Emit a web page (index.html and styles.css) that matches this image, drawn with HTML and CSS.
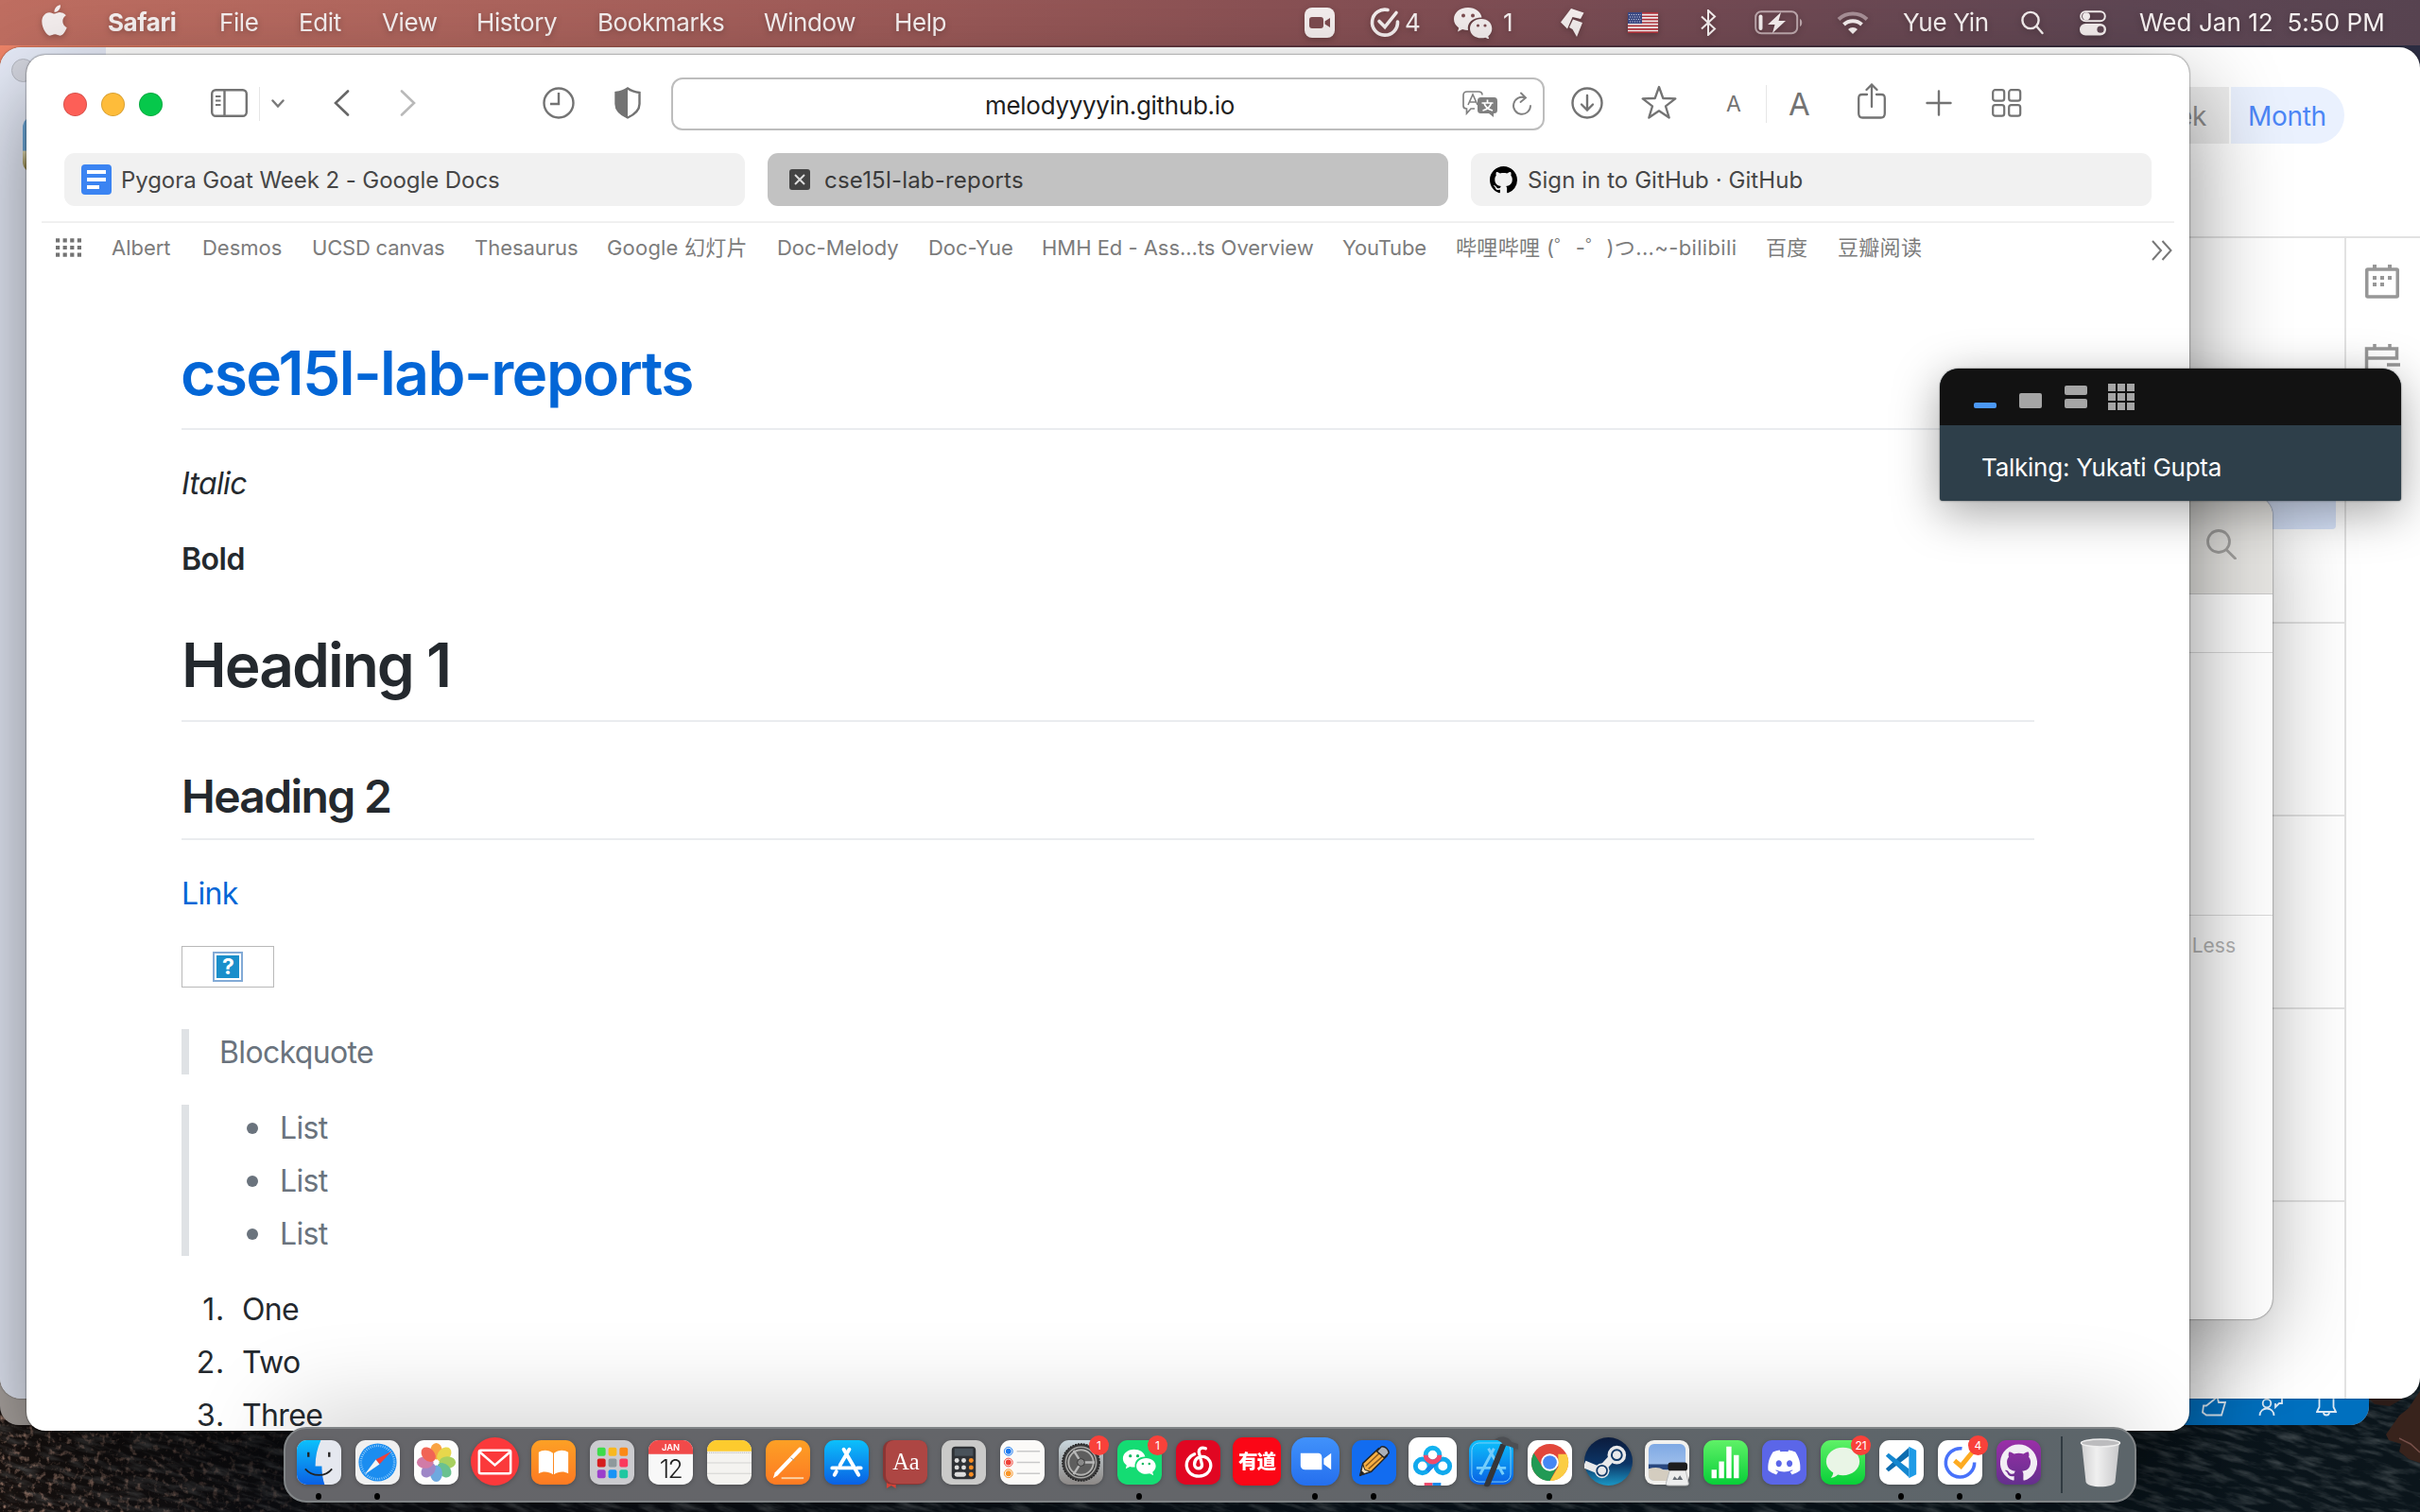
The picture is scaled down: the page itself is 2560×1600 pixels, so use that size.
FILE: index.html
```html
<!DOCTYPE html>
<html lang="en">
<head>
<meta charset="utf-8">
<title>cse15l-lab-reports</title>
<link rel="stylesheet" href="styles.css">
</head>
<body>
<div class="desktop">
  <svg class="wallpaper" viewBox="0 0 2560 140" preserveAspectRatio="none">
    <defs>
      <filter id="waves" x="0" y="0" width="100%" height="100%"><feTurbulence type="fractalNoise" baseFrequency="0.035 0.16" numOctaves="4" seed="7"/><feColorMatrix values="0 0 0 0 .42  0 0 0 0 .45  0 0 0 0 .45  1.7 0 0 0 -.75"/></filter>
      <filter id="sand" x="0" y="0" width="100%" height="100%"><feTurbulence type="fractalNoise" baseFrequency="0.16" numOctaves="3" seed="3"/><feColorMatrix values="0 0 0 0 .55  0 0 0 0 .32  0 0 0 0 .24  3 0 0 0 -1.6"/></filter>
      <linearGradient id="sea"><stop offset="0" stop-color="#17110f"/><stop offset=".12" stop-color="#0d0e12"/><stop offset=".6" stop-color="#08131b"/><stop offset="1" stop-color="#0b151b"/></linearGradient>
      <linearGradient id="fade"><stop offset="0" stop-color="#ccc"/><stop offset="1" stop-color="#000"/></linearGradient>
      <mask id="left"><rect width="420" height="140" fill="url(#fade)"/></mask>
    </defs>
    <rect width="2560" height="140" fill="url(#sea)"/>
    <g transform="rotate(14 1280 70)"><rect x="-40" y="-300" width="2640" height="740" filter="url(#waves)" opacity=".4"/></g>
    <g mask="url(#left)"><rect width="420" height="140" filter="url(#sand)"/></g>
    <path d="M2560 12 2548 30 2538 38 2524 58 2527 64 2540 68 2538 76 2548 84 2560 88Z" fill="#38231c"/>
    <path d="M2538 62l12 6 10 9" fill="none" stroke="#77504a" stroke-width="1.500"/>
    <path d="M2506 20h36l-14 8-16-2z" fill="#2c1c18"/>
  </svg>

  <header class="menubar">
    <nav class="menus">
      <svg class="apple" viewBox="2 0 20 24"><path fill="#f4eeee" d="M12.152 6.896c-.948 0-2.415-1.078-3.96-1.04-2.04.027-3.91 1.183-4.961 3.014-2.117 3.675-.546 9.103 1.519 12.09 1.013 1.454 2.208 3.09 3.792 3.039 1.52-.065 2.09-.987 3.935-.987 1.831 0 2.35.987 3.96.948 1.637-.026 2.676-1.48 3.676-2.948 1.156-1.688 1.636-3.325 1.662-3.415-.039-.013-3.182-1.221-3.22-4.857-.026-3.04 2.48-4.494 2.597-4.559-1.429-2.09-3.623-2.324-4.39-2.376-2-.156-3.675 1.09-4.61 1.09zM15.53 3.83c.843-1.012 1.4-2.427 1.245-3.83-1.207.052-2.662.805-3.532 1.818-.78.896-1.454 2.338-1.273 3.714 1.338.104 2.715-.688 3.559-1.701"/></svg>
      <b>Safari</b><span>File</span><span>Edit</span><span>View</span><span>History</span><span>Bookmarks</span><span>Window</span><span>Help</span>
    </nav>
    <div class="status">
      <svg class="s-cam" viewBox="0 0 32 32"><rect width="32" height="32" rx="8" fill="#f4eeee"/><rect x="5" y="10" width="15" height="12" rx="3" fill="#7d4c50"/><path d="M21.500 14.500 27 11v10l-5.500-3.500z" fill="#7d4c50"/></svg>
      <svg class="s-tick" viewBox="0 0 34 34" fill="none" stroke="#f4eeee" stroke-width="3.600" stroke-linecap="round"><path d="M20 3.500A13.500 13.500 0 1 0 30.500 16"/><path d="m11 15.500 6 6L29 6.500"/></svg>
      <span class="s-four">4</span>
      <svg class="s-wechat" viewBox="0 0 42 34"><path fill="#f4eeee" d="M16 1C7 1 1 6.500 1 13.200c0 3.800 2 7 5.200 9.200L5 26.500l5-2.500c2 .6 4 .9 6 .9-1.500-8 5-13.500 14.500-13.500C29.500 5.500 23.500 1 16 1z"/><path fill="#f4eeee" d="M30 13c-7 0-12 4.600-12 10.200S23 33.300 30 33.300c1.500 0 3-.2 4.300-.6l4 2-1-3.500c2.500-1.900 4-4.700 4-8C41.300 17.600 37 13 30 13z"/><g fill="#7d4c50"><circle cx="11" cy="9.500" r="2"/><circle cx="21" cy="9.500" r="2"/><circle cx="26.500" cy="20" r="1.600"/><circle cx="34" cy="20" r="1.600"/></g></svg>
      <span class="s-one">1</span>
      <svg class="s-kite" viewBox="0 0 28 32"><path fill="#f4eeee" d="M12 1 25.500 5.500 22 12 13.500 10 8 22.500 1 15.500zM14 12.500l10 3.500-6 15-4.500-8-3.500-2z"/></svg>
      <svg class="s-flag" viewBox="0 0 32 22"><rect width="32" height="22" fill="#f6f2f2"/><path stroke="#b2323b" stroke-width="1.700" d="M0 .85h32M0 4.250h32M0 7.600h32M0 11h32M0 14.400h32M0 17.800h32M0 21.150h32"/><rect width="15" height="12" fill="#3c4a85"/><path stroke="#d9dcec" stroke-width="1" stroke-dasharray="1 1.500" d="M1 2.500h13M2 5h12M1 7.500h13M2 10h12"/></svg>
      <svg class="s-bt" viewBox="0 0 18 28" fill="none" stroke="#f4eeee" stroke-width="2"><path d="m2 7.500 14 13L9 27V1l7 6.500-14 13"/></svg>
      <svg class="s-bat" viewBox="0 0 52 26"><rect x="1.200" y="1.200" width="44" height="23" rx="6" fill="none" stroke="#bda7ac" stroke-width="2"/><path d="M48 9c3 1 3 7 0 8z" fill="#bda7ac"/><rect x="4.500" y="4.500" width="4" height="16.500" rx="2" fill="#f4eeee"/><path d="M28 2 14 15h7.500L19 24l14-13h-7.500z" fill="#f4eeee"/></svg>
      <svg class="s-wifi" viewBox="0 0 34 24" fill="none"><path d="M2 8.500a22 22 0 0 1 30 0" stroke="#a78f96" stroke-width="4"/><path d="M7.500 14a14 14 0 0 1 19 0" stroke="#f4eeee" stroke-width="4"/><path d="m17 24-5-5a7 7 0 0 1 10 0z" fill="#f4eeee"/></svg>
      <span class="s-user">Yue Yin</span>
      <svg class="s-search" viewBox="0 0 24 26" fill="none" stroke="#f4eeee" stroke-width="2.400" stroke-linecap="round"><circle cx="10" cy="10.500" r="8.600"/><path d="m16.500 17 6 7"/></svg>
      <svg class="s-cc" viewBox="0 0 28 27"><rect x="1.200" y="1.200" width="25.600" height="10" rx="5" fill="none" stroke="#f4eeee" stroke-width="2"/><circle cx="7" cy="6.200" r="4" fill="#f4eeee"/><rect y="14" width="28" height="12.500" rx="6.200" fill="#f4eeee"/><circle cx="22" cy="20.200" r="3.600" fill="#5f4753"/></svg>
      <span class="s-date">Wed Jan 12&nbsp; 5:50 PM</span>
    </div>
  </header>

  <section class="window code-window">
    <div class="code-status">
      <svg class="thumb" viewBox="0 0 26 28" fill="none" stroke="#dce9f4" stroke-width="1.800"><path d="M2 16.500h3L14.500 9 13 5h3l2 8h7l-4 13.500H5l-4-3z"/></svg>
      <svg class="person" viewBox="0 0 28 28" fill="none" stroke="#dce9f4" stroke-width="1.800"><circle cx="9" cy="14" r="4.300"/><path d="M1.500 27c0-10 15-10 15 0M12 4h13v10h-3l-4 4v-4"/></svg>
      <svg class="bell" viewBox="0 0 22 28" fill="none" stroke="#dce9f4" stroke-width="1.800"><path d="M1 23h20l-2.500-5v-9c0-8-15-8-15 0v9zM8 23.500c0 4 6 4 6 0"/></svg>
    </div>
  </section>

  <section class="window planner">
    <aside class="planner-side"><i class="planner-dot"></i><i class="planner-photo"></i></aside>
    <div class="planner-main">
      <div class="planner-top"><div class="views"><span class="view-week">Week</span><span class="view-month">Month</span></div></div>
      <div class="planner-body">
        <div class="weeks"><div><i class="event"></i></div><div></div><div></div><div></div><div></div></div>
        <div class="rail">
          <svg viewBox="0 0 38 38" fill="none" stroke="#979797" stroke-width="3.500"><rect x="2.750" y="6" width="32.500" height="29" rx="1"/><path d="M11 1v6M27 1v6" stroke-width="4"/><path d="M9 15h4m4 0h4m4 0h4M9 22h4m4 0h4" stroke-width="3.800"/></svg>
          <svg viewBox="0 0 38 38" fill="none" stroke="#979797" stroke-width="3.500"><path d="M2.500 36V6h32v10H2M24 23h14M11 1v6M27 1v6"/></svg>
          <svg class="dots" viewBox="0 0 38 10" fill="#929292"><circle cx="5" cy="5" r="4"/><circle cx="19" cy="5" r="4"/><circle cx="33" cy="5" r="4"/></svg>
        </div>
      </div>
    </div>
  </section>

  <section class="window chat">
    <div class="chat-head"><svg viewBox="0 0 32 32" fill="none" stroke="#a3a2a0" stroke-width="2.800" stroke-linecap="round"><circle cx="13" cy="13" r="11.500"/><path d="m21.500 22 9 9"/></svg></div>
    <div class="chat-tabs"></div>
    <div class="chat-list"></div>
    <div class="chat-less">Less</div>
  </section>

  <section class="window safari">
    <div class="toolbar">
      <div class="lights"><i class="red"></i><i class="yellow"></i><i class="green"></i></div>
      <svg class="t-side" viewBox="0 0 39 30" fill="none" stroke="#737373" stroke-width="2.400"><rect x="1.200" y="1.200" width="36.600" height="27.600" rx="4"/><path d="M14.500 1v28"/><path d="M5 8h5.500M5 12.500h5.500M5 17h5.500" stroke-width="1.800"/></svg>
      <i class="t-line"></i>
      <svg class="t-down" viewBox="0 0 14 9" fill="none" stroke="#7a7a7a" stroke-width="2.400" stroke-linecap="round"><path d="m1.500 1.500 5.500 6 5.500-6"/></svg>
      <svg class="t-back" viewBox="0 0 17 28" fill="none" stroke="#666" stroke-width="2.600" stroke-linecap="round"><path d="M15 1.500 2 14l13 12.500"/></svg>
      <svg class="t-fwd" viewBox="0 0 17 28" fill="none" stroke="#b9b9b9" stroke-width="2.600" stroke-linecap="round"><path d="M2 1.500 15 14 2 26.500"/></svg>
      <svg class="t-clock" viewBox="0 0 34 34" fill="none" stroke="#737373" stroke-width="2.400"><circle cx="17" cy="17" r="15.500"/><path d="M17 6v12H8"/></svg>
      <svg class="t-shield" viewBox="0 0 28 34"><path d="M14 1.500c4 3 8 4 12.500 4.500v12c0 7-5 11-12.500 14.500C6.500 29 1.500 25 1.500 18V6C6 5.500 10 4.500 14 1.500z" fill="none" stroke="#737373" stroke-width="2.400"/><path d="M14 1v32C6 29 1 25 1 18V6C6 5.500 10 4.500 14 1z" fill="#737373"/></svg>
      <div class="address">
        <span>melodyyyyin.github.io</span>
        <svg class="t-trans" viewBox="0 0 38 28"><path d="M13 19H9l-4.500 5v-5C2 19 1 18 1 16V5c0-3 1-4 4-4h12c3 0 4 1 4 3.500" fill="none" stroke="#808080" stroke-width="1.700"/><path d="M6 15 11 4l5 11M7.500 12h7" fill="none" stroke="#808080" stroke-width="1.600"/><path d="M20 7h13c3 0 4 1 4 4v9c0 3-1 4-4 4v4l-5-4h-8c-3 0-4-1-4-4v-9c0-3 1-4 4-4z" fill="#808080"/><path d="M26.500 9.500v3M20.500 13h12M23 13c1 4 5 7 9 8M30.500 13c-1 4-5 7-9 8" fill="none" stroke="#fff" stroke-width="1.700"/></svg>
        <svg class="t-reload" viewBox="0 0 22 26" fill="none" stroke="#808080" stroke-width="1.900" stroke-linecap="round"><path d="M14 6.300A9 9 0 1 0 20 15M10 1.500l5 5-5.500 4.500"/></svg>
      </div>
      <svg class="t-dl" viewBox="0 0 34 34" fill="none" stroke="#737373" stroke-width="2.400"><circle cx="17" cy="17" r="15.500"/><path d="M17 9v15M11 18.500l6 6 6-6" stroke-linecap="round"/></svg>
      <svg class="t-star" viewBox="0 0 38 36" fill="none" stroke="#737373" stroke-width="2.300" stroke-linejoin="round"><path d="m19 2 4.300 12 13 .4L26 22.300l3.700 12.200L19 27.300 8.300 34.500 12 22.300 1.700 14.400l13-.4z"/></svg>
      <span class="t-a small">A</span>
      <i class="t-line tall"></i>
      <span class="t-a">A</span>
      <svg class="t-share" viewBox="0 0 30 38" fill="none" stroke="#737373" stroke-width="2.300" stroke-linecap="round"><path d="M10 12H5c-3 0-3.800 1-3.800 4v16c0 3 1 4.500 4 4.500h19.600c3 0 4-1.500 4-4.500V16c0-3-.8-4-3.800-4h-5M15 25V2M9.500 7 15 1.500 20.500 7"/></svg>
      <svg class="t-plus" viewBox="0 0 28 28" stroke="#737373" stroke-width="2.400" stroke-linecap="round"><path d="M14 1.500v25M1.500 14h25"/></svg>
      <svg class="t-grid" viewBox="0 0 32 30" fill="none" stroke="#737373" stroke-width="2.200"><rect x="1.200" y="1.200" width="12" height="11.500" rx="2.500"/><rect x="18.200" y="1.200" width="12" height="11.500" rx="2.500"/><rect x="1.200" y="17.200" width="12" height="11.500" rx="2.500"/><rect x="18.200" y="17.200" width="12" height="11.500" rx="2.500"/></svg>
    </div>
    <div class="tabs">
      <div class="tab docs"><svg viewBox="0 0 32 32"><rect width="32" height="32" rx="4" fill="#3b84f2"/><path d="M6 8h20M6 16h20M6 24h13" stroke="#fff" stroke-width="4"/></svg><span>Pygora Goat Week 2 - Google Docs</span></div>
      <div class="tab active"><svg viewBox="0 0 22 22"><rect width="22" height="22" rx="3" fill="#444"/><path d="m6 6 10 10M16 6 6 16" stroke="#ddd" stroke-width="2"/></svg><span>cse15l-lab-reports</span></div>
      <div class="tab hub"><svg viewBox="0 0 16 16"><use href="#octocat"/></svg><span>Sign in to GitHub · GitHub</span></div>
    </div>
    <div class="favorites">
      <svg class="f-grid" viewBox="0 0 28 20" stroke="#737373" stroke-width="4.200" stroke-dasharray="4.200 3.400"><path d="M0 2.400h28M0 10h28M0 17.600h28"/></svg>
      <span>Albert</span><span>Desmos</span><span>UCSD canvas</span><span>Thesaurus</span><span>Google 幻灯片</span><span>Doc-Melody</span><span>Doc-Yue</span><span>HMH Ed - Ass...ts Overview</span><span>YouTube</span><span class="bili">哔哩哔哩 (゜-゜)つ...~-bilibili</span><span>百度</span><span>豆瓣阅读</span>
      <svg class="f-more" viewBox="0 0 24 22" fill="none" stroke="#777" stroke-width="2"><path d="m2 1 9 10-9 10M12.500 1l9 10-9 10"/></svg>
    </div>
    <main class="markdown">
      <h1><a>cse15l-lab-reports</a></h1>
      <p><em>Italic</em></p>
      <p><strong>Bold</strong></p>
      <h1>Heading 1</h1>
      <h2>Heading 2</h2>
      <p><a>Link</a></p>
      <div class="missing"><span><b>?</b></span></div>
      <blockquote>Blockquote</blockquote>
      <blockquote class="list"><ul><li>List</li><li>List</li><li>List</li></ul></blockquote>
      <ol><li>One</li><li>Two</li><li>Three</li></ol>
    </main>
  </section>

  <section class="call">
    <div class="call-bar">
      <svg viewBox="0 0 170 28"><g fill="#a5a5a5"><rect x="48" y="10" width="24" height="16" rx="2"/><rect x="96" y="2" width="24" height="10" rx="2"/><rect x="96" y="16" width="24" height="10" rx="2"/></g><rect y="20" width="24" height="6" rx="2" fill="#4b98f5"/><g stroke="#a5a5a5" stroke-width="8" stroke-dasharray="8 2"><path d="M142 4h28M142 14h28M142 24h28"/></g></svg>
    </div>
    <div class="call-body">Talking: Yukati Gupta</div>
  </section>

  <footer class="dock">
    <svg class="defs" width="0" height="0"><defs>
      <path id="octocat" d="M8 0C3.58 0 0 3.58 0 8c0 3.54 2.29 6.53 5.47 7.59.4.07.55-.17.55-.38 0-.19-.01-.82-.01-1.49-2.01.37-2.53-.49-2.69-.94-.09-.23-.48-.94-.82-1.13-.28-.15-.68-.52-.01-.53.63-.01 1.08.58 1.23.82.72 1.21 1.87.87 2.33.66.07-.52.28-.87.51-1.07-1.78-.2-3.64-.89-3.64-3.95 0-.87.31-1.59.82-2.15-.08-.2-.36-1.02.08-2.12 0 0 .67-.21 2.2.82.64-.18 1.32-.27 2-.27.68 0 1.36.09 2 .27 1.53-1.04 2.2-.82 2.2-.82.44 1.1.16 1.92.08 2.12.51.56.82 1.27.82 2.15 0 3.07-1.87 3.75-3.65 3.95.29.25.54.73.54 1.48 0 1.07-.01 1.93-.01 2.2 0 .21.15.46.55.38A8.013 8.013 0 0016 8c0-4.42-3.58-8-8-8z"/>
      <linearGradient id="gBlue" x2="0" y2="1"><stop stop-color="#0cc0fb"/><stop offset="1" stop-color="#0a60e4"/></linearGradient>
      <linearGradient id="gOrange" x2="0" y2="1"><stop stop-color="#fda025"/><stop offset="1" stop-color="#fd7a23"/></linearGradient>
      <linearGradient id="gGreen" x2="0" y2="1"><stop stop-color="#5ff167"/><stop offset="1" stop-color="#08cf38"/></linearGradient>
      <linearGradient id="gSteam" x2="0" y2="1"><stop stop-color="#0b1b3c"/><stop offset=".55" stop-color="#0c3566"/><stop offset="1" stop-color="#1a96c4"/></linearGradient>
      <linearGradient id="gGray" x2="0" y2="1"><stop stop-color="#c9d6dd"/><stop offset="1" stop-color="#8d8987"/></linearGradient>
      <linearGradient id="gZoom" x2="0" y2="1"><stop stop-color="#4192fb"/><stop offset="1" stop-color="#256fee"/></linearGradient>
      <linearGradient id="gTrash"><stop stop-color="#d0d0d1"/><stop offset=".4" stop-color="#f0f0f0"/><stop offset="1" stop-color="#c8c8ca"/></linearGradient>
      <linearGradient id="gPurple" x2="0" y2="1"><stop stop-color="#9a2fa8"/><stop offset="1" stop-color="#64308d"/></linearGradient>
      <linearGradient id="gSky" x2="0" y2="1"><stop stop-color="#7fa9e4"/><stop offset="1" stop-color="#b3cdf0"/></linearGradient>
    </defs></svg>
    <div class="app on"><svg viewBox="0 0 48 48"><rect width="48" height="48" rx="11" fill="#e5e8ef"/><path d="M11 0h15c-4 9-6 18-6 28h7c0 7 1 14 3 20H11A11 11 0 0 1 0 37V11A11 11 0 0 1 11 0z" fill="url(#gBlue)"/><path d="M12.500 13v5M35 13v5" stroke="#222" stroke-width="2.400"/><path d="M9 31c8 9 22 9 29 0" fill="none" stroke="#222" stroke-width="1.800"/></svg></div>
    <div class="app on"><svg viewBox="0 0 48 48"><rect width="48" height="48" rx="11" fill="#f0f0f0"/><circle cx="24" cy="24" r="20.500" fill="#1b8df0"/><circle cx="24" cy="24" r="18" fill="none" stroke="#9fd4fb" stroke-width="2.500" stroke-dasharray=".8 1.500"/><path d="M39 12 22 21l4 5z" fill="#f0413a"/><path d="m10 37 12-16 4 5z" fill="#f4f4f4"/></svg></div>
    <div class="app"><svg viewBox="0 0 48 48"><rect width="48" height="48" rx="11" fill="#fdfdfd"/><g opacity=".88"><ellipse cx="24" cy="12" rx="6.500" ry="9" fill="#f9972a"/><ellipse cx="24" cy="12" rx="6.500" ry="9" fill="#e6d234" transform="rotate(45 24 24)"/><ellipse cx="24" cy="12" rx="6.500" ry="9" fill="#9dca4a" transform="rotate(90 24 24)"/><ellipse cx="24" cy="12" rx="6.500" ry="9" fill="#55b982" transform="rotate(135 24 24)"/><ellipse cx="24" cy="12" rx="6.500" ry="9" fill="#5b9edb" transform="rotate(180 24 24)"/><ellipse cx="24" cy="12" rx="6.500" ry="9" fill="#9277c0" transform="rotate(225 24 24)"/><ellipse cx="24" cy="12" rx="6.500" ry="9" fill="#cc6a9c" transform="rotate(270 24 24)"/><ellipse cx="24" cy="12" rx="6.500" ry="9" fill="#f0503e" transform="rotate(315 24 24)"/></g></svg></div>
    <div class="app big"><svg viewBox="0 0 52 52"><circle cx="26" cy="26" r="26" fill="#fb393b"/><rect x="9" y="14" width="34" height="25" rx="2" fill="none" stroke="#fff" stroke-width="2.600"/><path d="m10 16 16 14 16-14" fill="none" stroke="#fff" stroke-width="2.600"/></svg></div>
    <div class="app"><svg viewBox="0 0 48 48"><rect width="48" height="48" rx="11" fill="url(#gOrange)"/><path d="M23.500 14C19 10 12 10 8 13v23c5-3 11-2 15.500 1zM24.500 14c4.500-4 11.500-4 15.500-1v23c-5-3-11-2-15.500 1z" fill="#fff"/></svg></div>
    <div class="app"><svg viewBox="0 0 48 48"><rect width="48" height="48" rx="11" fill="#cbcbcf"/><rect x="8" y="8" width="9" height="9" rx="2" fill="#3ddb4a"/><rect x="20" y="8" width="9" height="9" rx="2" fill="#f8b81f"/><rect x="32" y="8" width="9" height="9" rx="2" fill="#fb8916"/><rect x="8" y="20" width="9" height="9" rx="2" fill="#d51d1d"/><rect x="20" y="20" width="9" height="9" rx="2" fill="#8e999c"/><rect x="32" y="20" width="9" height="9" rx="2" fill="#fb3a5d"/><rect x="8" y="32" width="9" height="9" rx="2" fill="#9b3fcb"/><rect x="20" y="32" width="9" height="9" rx="2" fill="#1793f5"/><rect x="32" y="32" width="9" height="9" rx="2" fill="#1fc7a0"/></svg></div>
    <div class="app"><svg viewBox="0 0 48 48"><rect width="48" height="48" rx="11" fill="#f8f8f8"/><path d="M0 15v-4A11 11 0 0 1 11 0h26a11 11 0 0 1 11 11v4z" fill="#f14a4a"/><text x="24" y="11.500" class="cal-month">JAN</text><text x="24" y="41" class="cal-day">12</text></svg></div>
    <div class="app"><svg viewBox="0 0 48 48"><rect width="48" height="48" rx="11" fill="#f4f3f0"/><path d="M0 12v-1A11 11 0 0 1 11 0h26a11 11 0 0 1 11 11v1z" fill="#fdcb2e"/><path d="M0 13.500h48" stroke="#aaa" stroke-width="1" stroke-dasharray="1 1"/><path d="M0 24.500h48M0 36h48" stroke="#d2d2d0"/></svg></div>
    <div class="app"><svg viewBox="0 0 48 48"><rect width="48" height="48" rx="11" fill="url(#gOrange)"/><path d="M36 8c3-1 4 1 2 4L13 38l-5 3 2-6z" fill="#fff"/><path d="m27 19 4 3" stroke="#999"/><path d="M17 41h24" stroke="#fbd1a3" stroke-width="2"/></svg></div>
    <div class="app"><svg viewBox="0 0 48 48"><rect width="48" height="48" rx="11" fill="url(#gBlue)"/><path d="M27 10 17 27M13 34l-2 3.500M21 10l16 27.500M8.500 30H30M35.500 30h4" stroke="#fff" stroke-width="4" stroke-linecap="round"/></svg></div>
    <div class="app"><svg viewBox="0 0 48 48" overflow="visible"><path d="M4 44h10v8l-5-3-5 3z" fill="#d44136"/><rect width="48" height="48" rx="10" fill="#8a3634"/><rect x="3" width="45" height="47" rx="9" fill="#ad4643"/><text x="25" y="32" class="dict">Aa</text></svg></div>
    <div class="app"><svg viewBox="0 0 48 48"><rect width="48" height="48" rx="11" fill="#cacac9"/><rect x="11" y="7" width="26" height="35" rx="4" fill="#2e3135"/><rect x="14" y="9" width="20" height="8" fill="#49525a"/><g fill="#ddd"><circle cx="16.500" cy="22" r="2.500"/><circle cx="24" cy="22" r="2.500"/><circle cx="16.500" cy="29.500" r="2.500"/><circle cx="24" cy="29.500" r="2.500"/><rect x="14" y="34.500" width="12.500" height="5" rx="2.500"/></g><g fill="#fa8d22"><circle cx="32" cy="22" r="2.500"/><circle cx="32" cy="29.500" r="2.500"/><circle cx="32" cy="37" r="2.500"/></g></svg></div>
    <div class="app"><svg viewBox="0 0 48 48"><rect width="48" height="48" rx="11" fill="#fbfaf8"/><path d="M18 12h25M18 24h25M18 36h25" stroke="#c9c9c9" stroke-width="1.500"/><g stroke-width="1"><circle cx="9" cy="12" r="3" fill="#1a79f0"/><circle cx="9" cy="12" r="4.500" fill="none" stroke="#1a79f0"/><circle cx="9" cy="24" r="3" fill="#ef4035"/><circle cx="9" cy="24" r="4.500" fill="none" stroke="#ef4035"/><circle cx="9" cy="36" r="3" fill="#f99525"/><circle cx="9" cy="36" r="4.500" fill="none" stroke="#f99525"/></g></svg></div>
    <div class="app"><svg viewBox="0 0 48 48"><rect width="48" height="48" rx="11" fill="url(#gGray)"/><circle cx="24" cy="24" r="20" fill="#3b3b3c" stroke="#222" stroke-width="1.500" stroke-dasharray="2 1"/><circle cx="24" cy="24" r="16.500" fill="none" stroke="#a9a9a7" stroke-width="1.500"/><circle cx="24" cy="24" r="13.500" fill="#5e5e5e" stroke="#b2b2b0" stroke-width="2"/><path d="M26 24h13M23 22l-7-11M23 26l-7 11" stroke="#b8b8b8" stroke-width="2.400"/><circle cx="24" cy="24" r="4" fill="#888" stroke="#333"/></svg><i class="badge">1</i></div>
    <div class="app on"><svg viewBox="0 0 48 48"><rect width="48" height="48" rx="11" fill="#14dc73"/><path fill="#fff" d="M18 10C11 10 6 14.500 6 20c0 3 1.500 5.500 4 7l-1 4 4.500-2.500c2 .5 3.500.7 5.500.6C18 22 24 17.500 30 18c-1-5-6-8-12-8z"/><path fill="#fff" d="M31 19.500c-6 0-10.500 4-10.500 8.500S25 36.500 31 36.500c1.500 0 2.500-.2 4-.5l4 2-1-3.500c2-1.500 3.500-4 3.500-6.500 0-4.500-4.500-8.500-10.500-8.500z"/><g fill="#14b862"><circle cx="14" cy="17" r="1.700"/><circle cx="22" cy="17" r="1.700"/><circle cx="27.500" cy="25.500" r="1.300"/><circle cx="34.500" cy="25.500" r="1.300"/></g></svg><i class="badge">1</i></div>
    <div class="app"><svg viewBox="0 0 48 48"><rect width="48" height="48" rx="11" fill="#e10622"/><path d="M32 9c-5-2-8 1-7 5l3 12c1 6-8 6-8 0s5-9 11-8c10 3 9 20-6 21-16 0-18-19-5-24" fill="none" stroke="#fff" stroke-width="3.400" stroke-linecap="round"/></svg></div>
    <div class="app big"><svg viewBox="0 0 52 52"><rect width="52" height="52" rx="11" fill="#fb0616"/><text x="26" y="34" class="youdao">有道</text></svg></div>
    <div class="app big on"><svg viewBox="0 0 52 52"><rect width="52" height="52" rx="16" fill="url(#gZoom)"/><path d="M10 17h18c4 0 5 2 5 5v13H16c-4 0-6-2-6-5zM35 23l8-6v18l-8-6z" fill="#fff"/></svg></div>
    <div class="app on"><svg viewBox="0 0 48 48"><rect width="48" height="48" rx="11" fill="#126cf0"/><path d="m9 38 3-13L29 9l9 8-17 17z" fill="#f8b043" stroke="#222" stroke-width="1.500"/><path d="m15 28 17-16M18 31l17-15" stroke="#8a5a20" stroke-width="1.500"/><path d="m27 12 5-5c4-1 8 3 8 7l-5 5z" fill="#aab0b8" stroke="#222" stroke-width="1.500"/><path d="m9 38 3-12 2 6 6 2z" fill="#f3dfbd" stroke="#222"/><path d="m9 38 1.500-5 3.500 3z" fill="#222"/></svg></div>
    <div class="app big"><svg viewBox="0 0 52 52"><rect width="52" height="52" rx="11" fill="#fff"/><g fill="none" stroke-width="5"><circle cx="15" cy="31" r="7.500" stroke="#11a9ed"/><circle cx="37" cy="31" r="7.500" stroke="#11a9ed"/><path d="m20 36 14-13" stroke="#1687ea"/><circle cx="26" cy="19" r="7.500" stroke="#12b2f0"/><path d="M18.500 19a7.500 7.500 0 0 0 15 0" stroke="#ef4a6c"/></g><path d="M17 49h9v3h-9z" fill="#ef4a6c"/><path d="M26 49h9v3h-9z" fill="#1687ea"/></svg></div>
    <div class="app"><svg viewBox="0 0 48 48" overflow="visible"><rect width="48" height="48" rx="11" fill="url(#gBlue)"/><rect x="3" y="3" width="42" height="42" rx="8" fill="none" stroke="#7ed0fb"/><path d="M27 9 12 37M21 9l16 28M8 30h32" stroke="#74cdfb" stroke-width="3" fill="none"/><path d="M41 3 23 48q-2 4-7 1L34 4z" fill="#34363a"/><path d="M28-1c8-5 15-2 18 3l7 2v6l-9-3-7-2c-2-3-5-5-9-6z" fill="#4d4f53"/></svg></div>
    <div class="app on"><svg viewBox="0 0 48 48"><rect width="48" height="48" rx="11" fill="#fff"/><circle cx="24" cy="24" r="20" fill="#e2473b"/><path d="M42 15A20 20 0 0 1 24 44l9-15V15z" fill="#fbcd44"/><path d="M6.700 14 16 29h16l-8 15A20 20 0 0 1 6.700 14z" fill="#219a55"/><circle cx="24" cy="24" r="9.500" fill="#fff"/><circle cx="24" cy="24" r="7.500" fill="#4587f3"/></svg></div>
    <div class="app big"><svg viewBox="0 0 52 52"><circle cx="26" cy="26" r="26" fill="url(#gSteam)"/><path d="m0 29 17 7 13-14" fill="none" stroke="#e9e9ea" stroke-width="8"/><circle cx="35" cy="19" r="10" fill="#e9e9ea"/><circle cx="35" cy="19" r="5.500" fill="none" stroke="#123a68" stroke-width="2"/><circle cx="19" cy="36" r="8" fill="#e9e9ea"/><circle cx="19" cy="36" r="5.500" fill="none" stroke="#123a68" stroke-width="1.800"/></svg></div>
    <div class="app"><svg viewBox="0 0 48 48" overflow="visible"><rect width="48" height="48" rx="10" fill="#f2f1ee"/><rect x="4" y="4" width="40" height="40" rx="6" fill="url(#gSky)"/><path d="M4 26h40v6H4z" fill="#28477f"/><path d="M4 31q10-3 16 1l24 2v4a6 6 0 0 1-6 6H10a6 6 0 0 1-6-6z" fill="#d4cdc0"/><path d="M27 32h17l3 14q1 3-3 3H26q-4 0-3-3z" fill="#eceded" stroke="#b5b7b8"/><rect x="25" y="24" width="21" height="9" rx="3" fill="#1d1d1e"/><path d="m30 43 2-4 3 3 3-4 3 5z" fill="#666d75"/></svg></div>
    <div class="app"><svg viewBox="0 0 48 48"><rect width="48" height="48" rx="11" fill="url(#gGreen)"/><path d="M11.500 41v-9M19.500 41V23M27.500 41V7M35.500 41V16" stroke="#fff" stroke-width="5.500"/></svg></div>
    <div class="app"><svg viewBox="0 0 48 48"><rect width="48" height="48" rx="11" fill="#5b66e8"/><path transform="translate(6.500 6.500) scale(1.450)" fill="#fff" d="M20.317 4.370a19.791 19.791 0 0 0-4.885-1.515.074.074 0 0 0-.079.037c-.211.375-.445.865-.608 1.250-1.845-.276-3.680-.276-5.487 0-.164-.393-.406-.874-.618-1.250a.077.077 0 0 0-.079-.037 19.736 19.736 0 0 0-4.885 1.515.07.07 0 0 0-.032.028C.533 9.046-.319 13.580.099 18.058a.082.082 0 0 0 .031.056c2.053 1.508 4.041 2.423 5.993 3.029a.078.078 0 0 0 .084-.028c.462-.630.873-1.295 1.226-1.994a.076.076 0 0 0-.042-.106c-.653-.248-1.274-.550-1.872-.892a.077.077 0 0 1-.008-.128c.126-.094.252-.192.372-.291a.074.074 0 0 1 .078-.011c3.928 1.793 8.180 1.793 12.061 0a.074.074 0 0 1 .079.010c.120.099.246.198.373.292a.077.077 0 0 1-.007.128 12.299 12.299 0 0 1-1.873.891.077.077 0 0 0-.041.107c.360.698.772 1.363 1.225 1.993a.076.076 0 0 0 .084.029c1.961-.607 3.950-1.522 6.002-3.029a.077.077 0 0 0 .031-.055c.500-5.177-.838-9.674-3.549-13.660a.061.061 0 0 0-.031-.029zM8.020 15.331c-1.183 0-2.157-1.086-2.157-2.419s.956-2.419 2.157-2.419c1.211 0 2.176 1.095 2.157 2.419 0 1.333-.956 2.419-2.157 2.419zm7.975 0c-1.183 0-2.157-1.086-2.157-2.419s.955-2.419 2.157-2.419c1.211 0 2.176 1.095 2.157 2.419 0 1.333-.946 2.419-2.157 2.419z"/></svg></div>
    <div class="app"><svg viewBox="0 0 48 48"><rect width="48" height="48" rx="11" fill="url(#gGreen)"/><path d="M24 8c-10 0-18 6.500-18 15 0 5 3 9.500 7.500 12 0 2-1 4-2.500 5.500 3-.3 5.500-1.300 7.500-3.300 2 .5 3.500.8 5.500.8 10 0 18-6.500 18-15S34 8 24 8z" fill="#e9f5e6"/></svg><i class="badge">21</i></div>
    <div class="app on"><svg viewBox="0 0 48 48"><rect width="48" height="48" rx="11" fill="#fff"/><path d="M32 8v9L10 34l-3-3z" fill="#0c6cb0"/><path d="M32 40v-9L10 14l-3 3z" fill="#1487d0"/><path d="m32 7 8 4v26l-8 4z" fill="#1e9be6"/></svg></div>
    <div class="app on"><svg viewBox="0 0 48 48"><rect width="48" height="48" rx="11" fill="#fff"/><path d="M26 9A15.500 15.500 0 1 0 39.500 24" fill="none" stroke="#4872fa" stroke-width="3.600"/><path d="m18 22 7 6 13-16" fill="none" stroke="#fdab21" stroke-width="5"/></svg><i class="badge">4</i></div>
    <div class="app on"><svg viewBox="0 0 48 48"><rect width="48" height="48" rx="11" fill="url(#gPurple)"/><svg x="4" y="4" width="40" height="41" viewBox="0 0 16 16"><use href="#octocat" fill="#f2eef4"/></svg></svg></div>
    <i class="divider"></i>
    <svg class="trash" viewBox="0 0 44 52"><path d="M2 4h40l-4.500 42c-1 7-30 7-31 0z" fill="url(#gTrash)"/><ellipse cx="22" cy="5" rx="20.500" ry="4" fill="#bcbcbe" stroke="#eee" stroke-width="1.500"/></svg>
  </footer>
</div>
</body>
</html>
```
FILE: styles.css
```css
*, *::before, *::after { box-sizing: border-box; }
body { margin: 0; font-family: Inter, "Noto Sans CJK SC", sans-serif; }
svg { display: block; flex: none; }
i { font-style: normal; flex: none; }

.desktop { position: relative; width: 2560px; height: 1600px; overflow: hidden; background: linear-gradient(90deg, #ee8468, #6a3b44 50%, #2b2c41); }
.wallpaper { position: absolute; left: 0; bottom: 0; width: 2560px; height: 140px; }

/* menu bar */
.menubar { position: relative; display: flex; justify-content: space-between; height: 48px; padding: 0 38px 0 44px; background: linear-gradient(90deg, #bf6e61 0, #b0665e 430px, #a05c59 860px, #8a5154 1340px, #734a53 1800px, #5e4653 2250px, #574350 2560px); color: #f6f0f0; font-size: 26px; line-height: 48px; }
.menus, .status { display: flex; align-items: center; white-space: nowrap; }
.menus > *, .status > * { filter: drop-shadow(0 2px 3px rgba(0,0,0,.25)); }
.apple { width: 27px; height: 33px; margin-right: 43px; margin-top: -5px; }
.menus b, .menus span { flex: none; letter-spacing: -.4px; }
.menus b { width: 118px; }
.menus span:nth-of-type(1) { width: 84px; }
.menus span:nth-of-type(2) { width: 88px; }
.menus span:nth-of-type(3) { width: 100px; }
.menus span:nth-of-type(4) { width: 128px; }
.menus span:nth-of-type(5) { width: 176px; }
.menus span:nth-of-type(6) { width: 138px; }
.status span { flex: none; letter-spacing: -.3px; }
.s-cam { width: 32px; margin-right: 36px; }
.s-tick { width: 34px; margin-right: 4px; }
.status .s-four { width: 51px; }
.s-wechat { width: 42px; margin-right: 11px; }
.status .s-one { width: 60px; }
.s-kite { width: 28px; margin-right: 44px; }
.s-flag { width: 32px; margin-right: 44px; }
.s-bt { width: 18px; margin-right: 40px; }
.s-bat { width: 52px; margin-right: 35px; }
.s-wifi { width: 34px; margin-right: 36px; }
.status .s-user { width: 125px; }
.s-search { width: 24px; margin-right: 38px; }
.s-cc { width: 28px; margin-right: 35px; }
.status .s-date { width: 259px; letter-spacing: .05px; }

/* desktop windows */
.window { position: absolute; overflow: hidden; }
.code-window { left: 0; top: 90px; width: 2506px; height: 1418px; border-radius: 20px; background: #aaa4a0; display: flex; align-items: flex-end; justify-content: flex-end; }
.code-status { display: flex; align-items: flex-end; width: 1500px; height: 44px; justify-content: flex-end; padding: 0 34px 9px 0; background: #0070bf; }
.thumb { width: 26px; height: 28px; margin-right: 34px; }
.person { width: 28px; height: 28px; margin-right: 33px; }
.bell { width: 22px; height: 28px; }

.planner { left: 0; top: 50px; width: 2560px; height: 1430px; border-radius: 22px; background: #fff; display: flex; box-shadow: 0 0 2px rgba(0,0,0,.6); }
.planner-side { width: 112px; background: #e6ebf8; padding: 12px 0 0 12px; }
.planner-dot { display: block; width: 25px; height: 25px; border-radius: 50%; background: #d4d6df; border: 1px solid #b5b8c2; }
.planner-photo { display: block; width: 60px; height: 60px; margin: 36px 0 0 12px; border-radius: 12px; background: linear-gradient(#6ba6d6 60%, #ddd7b0 62%, #8a7a35); }
.planner-main { flex: 1; display: flex; flex-direction: column; }
.planner-top { height: 200px; display: flex; justify-content: flex-end; padding: 42px 80px 0 0; }
.views { display: flex; gap: 2px; height: 60px; font-size: 28px; line-height: 63px; letter-spacing: -.3px; }
.view-week { width: 130px; padding-right: 24px; text-align: right; background: #ededed; color: #8b8b8b; }
.view-month { width: 120px; padding-left: 18px; background: #eaf1fe; color: #4c86f6; border-radius: 0 30px 30px 0; }
.planner-body { flex: 1; display: flex; border-top: 2px solid #e2e2e2; }
.weeks { flex: 1; display: flex; flex-direction: column; }
.weeks div { flex: none; height: 204px; border-bottom: 2px solid #e2e2e2; }
.weeks div:first-child { height: 408px; padding-top: 221px; }
.weeks div:last-child { border: 0; }
.event { display: block; height: 87px; margin-right: 9px; background: #d9e5fc; border-radius: 4px; }
.rail { width: 80px; border-left: 2px solid #e2e2e2; padding: 27px 0 0 19px; }
.rail svg { width: 38px; height: 38px; margin-bottom: 46px; }
.rail svg.dots { height: 10px; margin-top: 99px; }

.chat { left: 1500px; top: 524px; width: 904px; height: 872px; border-radius: 22px; background: #fff; display: flex; flex-direction: column; box-shadow: 0 0 2px rgba(0,0,0,.7), 0 20px 90px rgba(0,0,0,.3); }
.chat-head { height: 105px; display: flex; justify-content: flex-end; padding: 36px 38px 0 0; background: #e6e5e2; border-bottom: 1px solid #c9c9c9; }
.chat-head svg { width: 32px; height: 32px; }
.chat-tabs { height: 62px; border-bottom: 1px solid #dadada; }
.chat-list { height: 278px; border-bottom: 1px solid #dadada; }
.chat-less { padding: 18px 39px 0 0; text-align: right; font-size: 21px; line-height: 28px; color: #b3b3b3; }

/* browser */
.safari { left: 28px; top: 58px; width: 2288px; height: 1456px; border-radius: 20px; background: #fff; box-shadow: 0 0 2px rgba(0,0,0,.8), 0 40px 100px rgba(0,0,0,.48); }
.toolbar { display: flex; align-items: center; height: 104px; padding-left: 39px; }
.toolbar > svg { position: relative; top: -1px; }
.lights { display: flex; gap: 15px; margin-right: 51px; }
.lights i { width: 25px; height: 25px; border-radius: 50%; border: 1px solid rgba(0,0,0,.15); }
.red { background: #fd5f57; } .yellow { background: #febc3a; } .green { background: #06c84b; }
.t-side { width: 39px; margin-right: 12px; }
.t-line { width: 1px; height: 36px; background: #e6e6e6; margin-right: 12px; }
.t-line.tall { height: 40px; margin-right: 23px; }
.t-down { width: 14px; margin-right: 52px; }
.t-back { width: 17px; margin-right: 53px; }
.t-fwd { width: 17px; margin-right: 134px; }
.t-clock { width: 34px; margin-right: 42px; }
.t-shield { width: 28px; margin-right: 32px; }
.address { display: flex; align-items: center; width: 924px; height: 56px; border: 2px solid #bdbdbd; border-radius: 12px; padding-right: 11px; margin-right: 28px; font-size: 26px; line-height: 50px; letter-spacing: -.3px; color: #1f1f1f; }
.address span { flex: 1; text-align: center; padding: 3px 0 0 89px; }
.t-trans { width: 38px; margin-right: 14px; }
.t-reload { width: 22px; }
.t-dl { width: 34px; margin-right: 40px; }
.t-star { width: 38px; margin-right: 52px; margin-top: -3px; }
.t-a { width: 23px; font-size: 33px; color: #737373; margin-right: 50px; line-height: 40px; text-align: center; }
.t-a.small { width: 16px; font-size: 23px; margin-right: 26px; }
.t-share { width: 30px; margin-right: 42px; margin-top: -4px; }
.t-plus { width: 28px; margin-right: 42px; }
.t-grid { width: 32px; }

.tabs { display: flex; gap: 24px; height: 72px; padding: 0 40px 0; }
.tab { display: flex; align-items: center; width: 720px; height: 56px; border-radius: 11px; background: #f1f1f1; color: #464646; font-size: 24px; letter-spacing: -.07px; }
.tab.active { background: #c2c2c2; color: #3a3a3a; padding-left: 23px; letter-spacing: .2px; }
.tab.docs { padding-left: 18px; }
.tab.hub { padding-left: 20px; letter-spacing: .07px; }
.docs svg { width: 32px; margin-right: 10px; }
.active svg { width: 22px; margin-right: 15px; }
.hub svg { width: 29px; margin-right: 11px; color: #000; }
.favorites { display: flex; align-items: center; height: 54px; margin: 0 16px; padding-left: 15px; border-top: 2px solid #f0f0f0; color: #7c7c7c; font-size: 22px; line-height: 50px; white-space: nowrap; letter-spacing: -.03px; }
.f-grid { width: 28px; margin-right: 31px; }
.favorites span { flex: none; width: 96px; }
.favorites span:nth-of-type(2) { width: 116px; }
.favorites span:nth-of-type(3) { width: 172px; letter-spacing: -.2px; }
.favorites span:nth-of-type(4) { width: 140px; }
.favorites span:nth-of-type(5) { width: 180px; letter-spacing: .2px; }
.favorites span:nth-of-type(6) { width: 160px; }
.favorites span:nth-of-type(7) { width: 120px; }
.favorites span:nth-of-type(8) { width: 318px; }
.favorites span:nth-of-type(9) { width: 120px; letter-spacing: -.2px; }
.favorites span:nth-of-type(10) { width: 328px; letter-spacing: .35px; }
.favorites span:nth-of-type(11) { width: 76px; }
.favorites span:nth-of-type(12) { width: 331px; letter-spacing: .3px; }
.f-more { width: 24px; margin-top: 6px; }

.markdown { width: 1960px; margin-left: 164px; padding-top: 66px; font-size: 32px; line-height: 48px; color: #24292e; letter-spacing: -.65px; }
.markdown a { color: #0366d6; }
.markdown h1 { margin: 0 0 32px; padding: 2px 0 19px; border-bottom: 2px solid #eaecef; font-size: 64px; line-height: 78px; font-weight: 600; letter-spacing: -2px; }
.markdown h1 a { letter-spacing: -1.550px; margin-left: -1px; }
.markdown p { margin: 0 0 32px; padding-top: 2px; line-height: 46px; }
.markdown p + h1 { margin-top: 48px; }
.markdown h2 { margin: 48px 0 32px; padding: 2px 0 16px; border-bottom: 2px solid #eaecef; font-size: 48px; line-height: 57px; font-weight: 600; letter-spacing: -1.650px; }
.markdown strong { font-weight: 600; letter-spacing: -.5px; }
.missing { height: 57px; margin-bottom: 31px; }
.missing span { display: flex; align-items: center; justify-content: center; width: 98px; height: 44px; border: 1px solid #b9b9b9; }
.missing b { width: 32px; height: 32px; border: 2px solid #82aad6; outline: 2px solid #fff; outline-offset: -4px; background: #1a8fcb; color: #fff; font-size: 23px; line-height: 28px; text-align: center; }
blockquote { margin: 0 0 32px; padding: 2px 0 0 32px; border-left: 8px solid #dfe2e5; color: #6a737d; line-height: 46px; }
blockquote.list { padding-top: 0; }
.markdown ul, .markdown ol { margin: 0; padding-left: 64px; list-style: none; }
.markdown li { padding-top: 2px; line-height: 46px; }
.markdown li + li { margin-top: 8px; }
ul li::before { content: ""; display: inline-block; width: 12px; height: 12px; margin: -4px 23px 0 -35px; border-radius: 50%; background: #6a737d; vertical-align: middle; }
ol { counter-reset: step; }
ol li { counter-increment: step; }
ol li::before { content: counter(step) "."; display: inline-block; width: 64px; margin-left: -64px; padding-right: 18px; text-align: right; letter-spacing: .8px; }

/* call overlay */
.call { position: absolute; left: 2052px; top: 390px; width: 488px; height: 140px; border-radius: 20px 20px 3px 3px; overflow: hidden; background: #2e3f4a; box-shadow: 0 0 2px rgba(0,0,0,.6), 0 12px 50px rgba(0,0,0,.36); }
.call-bar { height: 60px; padding: 16px 0 0 36px; background: #121212; }
.call-bar svg { width: 170px; height: 28px; }
.call-body { padding: 25px 0 0 44px; font-size: 26px; line-height: 40px; letter-spacing: -.25px; color: #fff; }

/* dock */
.dock { position: absolute; left: 300px; top: 1510px; width: 1960px; height: 80px; display: flex; align-items: flex-start; padding: 0 0 0 4px; border: 2px solid #808486; border-radius: 24px; background: linear-gradient(90deg, #656569, #636569 50%, #5c656a); box-shadow: 0 -10px 100px rgba(0,0,0,.22); }
.dock > svg.defs { position: absolute; }
.app { position: relative; width: 62px; height: 76px; padding: 12px 7.500px 0; flex: none; }
.app > svg { width: 47px; height: 47px; filter: drop-shadow(0 1px 2px rgba(0,0,0,.25)); }
.app.big { padding: 9px 5.500px 0; }
.app.big > svg { width: 51px; height: 51px; }
.app.on::after { content: ""; position: absolute; left: 28px; top: 68px; width: 6px; height: 7px; border-radius: 50%; background: #000; }
.badge { position: absolute; right: 1px; top: 7px; width: 21px; height: 21px; border-radius: 50%; background: #f9413a; color: #fff; font-size: 12px; line-height: 21px; text-align: center; }
.cal-month { font: 600 9.500px Inter, sans-serif; fill: #fff; text-anchor: middle; }
.cal-day { font: 300 27px Inter, sans-serif; fill: #222; text-anchor: middle; letter-spacing: -1.500px; }
.dict { font: 25px "Liberation Serif", serif; fill: #fff; text-anchor: middle; }
.youdao { font: 900 21px "Noto Sans CJK SC", sans-serif; fill: #fff; text-anchor: middle; letter-spacing: -1px; }
.divider { width: 2px; height: 60px; margin: 8px 0 0 14px; background: #303a41; }
.trash { width: 44px; height: 52px; margin: 10px 0 0 18px; }
```
